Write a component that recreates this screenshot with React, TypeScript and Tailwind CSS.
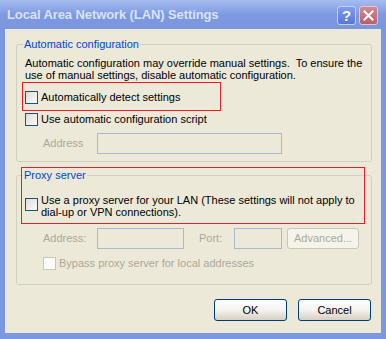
import React from 'react';

const ui = { fontFamily: '"Liberation Sans", Arial, sans-serif' };

function Check({ disabled = false }: { disabled?: boolean }) {
    return (
        <span
            className={
                disabled
                    ? 'block w-[13px] h-[13px] shrink-0 border border-[#cac8bb] bg-[#fbfbf8]'
                    : 'block w-[13px] h-[13px] shrink-0 border border-[#1c5180] bg-gradient-to-br from-[#dcdcd7] to-[#fbfbf9]'
            }
        />
    );
}

function Field({ w }: { w: string }) {
    return <span className={`block h-[21px] border border-[#a9bad0] bg-[#ece9d8] ${w}`} />;
}

export default function App() {
    return (
        <div className="w-[386px] h-[339px] bg-[#7b97e0] flex flex-col text-[11px] text-black" style={ui}>
            {/* title bar */}
            <div className="h-[29px] flex items-center pl-[7px] pr-[8px] bg-gradient-to-b from-[#a7bdf0] via-[#7e99e1] to-[#7b96df]">
                <span className="flex-1 text-[13px] font-bold text-[#d8e3f8] tracking-[-0.1px]">Local Area Network (LAN) Settings</span>
                <div className="flex gap-[3px] pt-[1px]">
                    <span className="w-[19px] h-[19px] rounded-[3px] border border-[#c5d3f3] bg-gradient-to-b from-[#7f9df0] to-[#5677d6] flex items-center justify-center text-white font-bold text-[15px] leading-none">?</span>
                    <span className="w-[19px] h-[19px] rounded-[3px] border border-[#e1c4cc] bg-gradient-to-b from-[#cf8a92] to-[#b8606c] flex items-center justify-center">
                        <svg width="11" height="11" viewBox="0 0 11 11">
                            <path d="M1.5 1.5 L9.5 9.5 M9.5 1.5 L1.5 9.5" stroke="white" strokeWidth="2" strokeLinecap="square" />
                        </svg>
                    </span>
                </div>
            </div>

            {/* body */}
            <div className="relative flex-1 mx-[5px] mb-[6px] bg-[#ece9d8] flex flex-col">
                <fieldset className="ml-[11px] mr-[9px] mt-[9px] border border-[#d0d0bf] rounded-[3px] px-[6px] pb-[7px]">
                    <legend className="px-[1px] leading-[13px] text-[#0046d5]">Automatic configuration</legend>
                    <div className="pl-[2px]">
                        <p className="mt-[6px] leading-[12px]">
                            Automatic configuration may override manual settings.&nbsp; To ensure the use of manual settings, disable automatic configuration.
                        </p>
                        <div className="mt-[10px] flex items-center gap-[3px] leading-[13px]">
                            <Check />
                            <span>Automatically detect settings</span>
                        </div>
                        <div className="mt-[9px] flex items-center gap-[3px] leading-[13px]">
                            <Check />
                            <span>Use automatic configuration script</span>
                        </div>
                        <div className="mt-[7px] flex items-center pl-[18px]">
                            <span className="w-[54px] text-[#aca899]">Address</span>
                            <Field w="w-[185px]" />
                        </div>
                    </div>
                </fieldset>

                <fieldset className="ml-[11px] mr-[9px] mt-[7px] border border-[#d0d0bf] rounded-[3px] px-[6px] pb-[14px]">
                    <legend className="px-[1px] leading-[13px] text-[#0046d5]">Proxy server</legend>
                    <div className="pl-[2px]">
                        <div className="mt-[12px] flex items-start gap-[3px]">
                            <span className="mt-[4px]">
                                <Check />
                            </span>
                            <span className="leading-[12px]">
                                Use a proxy server for your LAN (These settings will not apply to dial-up or VPN connections).
                            </span>
                        </div>
                        <div className="mt-[10px] flex items-center pl-[18px] text-[#aca899]">
                            <span className="w-[54px]">Address:</span>
                            <Field w="w-[87px]" />
                            <span className="ml-[15px] w-[35px]">Port:</span>
                            <Field w="w-[48px]" />
                            <span className="ml-[5px] w-[72px] h-[21px] rounded-[3px] border border-[#c9c7ba] bg-[#f5f4ea] flex items-center justify-center">
                                Advanced...
                            </span>
                        </div>
                        <div className="mt-[8px] flex items-center gap-[3px] pl-[18px] leading-[13px] text-[#aca899]">
                            <Check disabled />
                            <span>Bypass proxy server for local addresses</span>
                        </div>
                    </div>
                </fieldset>

                <div className="mt-[14px] mr-[10px] flex justify-end gap-[11px]">
                    <button className="w-[73px] h-[22px] rounded-[3px] border border-[#003c74] bg-gradient-to-b from-white via-[#f4f3ee] to-[#d6d0c5]">OK</button>
                    <button className="w-[73px] h-[22px] rounded-[3px] border border-[#003c74] bg-gradient-to-b from-white via-[#f4f3ee] to-[#d6d0c5]">Cancel</button>
                </div>

                {/* red highlight boxes */}
                <div className="absolute left-[17px] top-[53px] w-[199px] h-[29px] border border-[#ee1c24]" />
                <div className="absolute left-[16px] top-[138px] w-[344px] h-[57px] border border-[#ee1c24]" />
            </div>
        </div>
    );
}
